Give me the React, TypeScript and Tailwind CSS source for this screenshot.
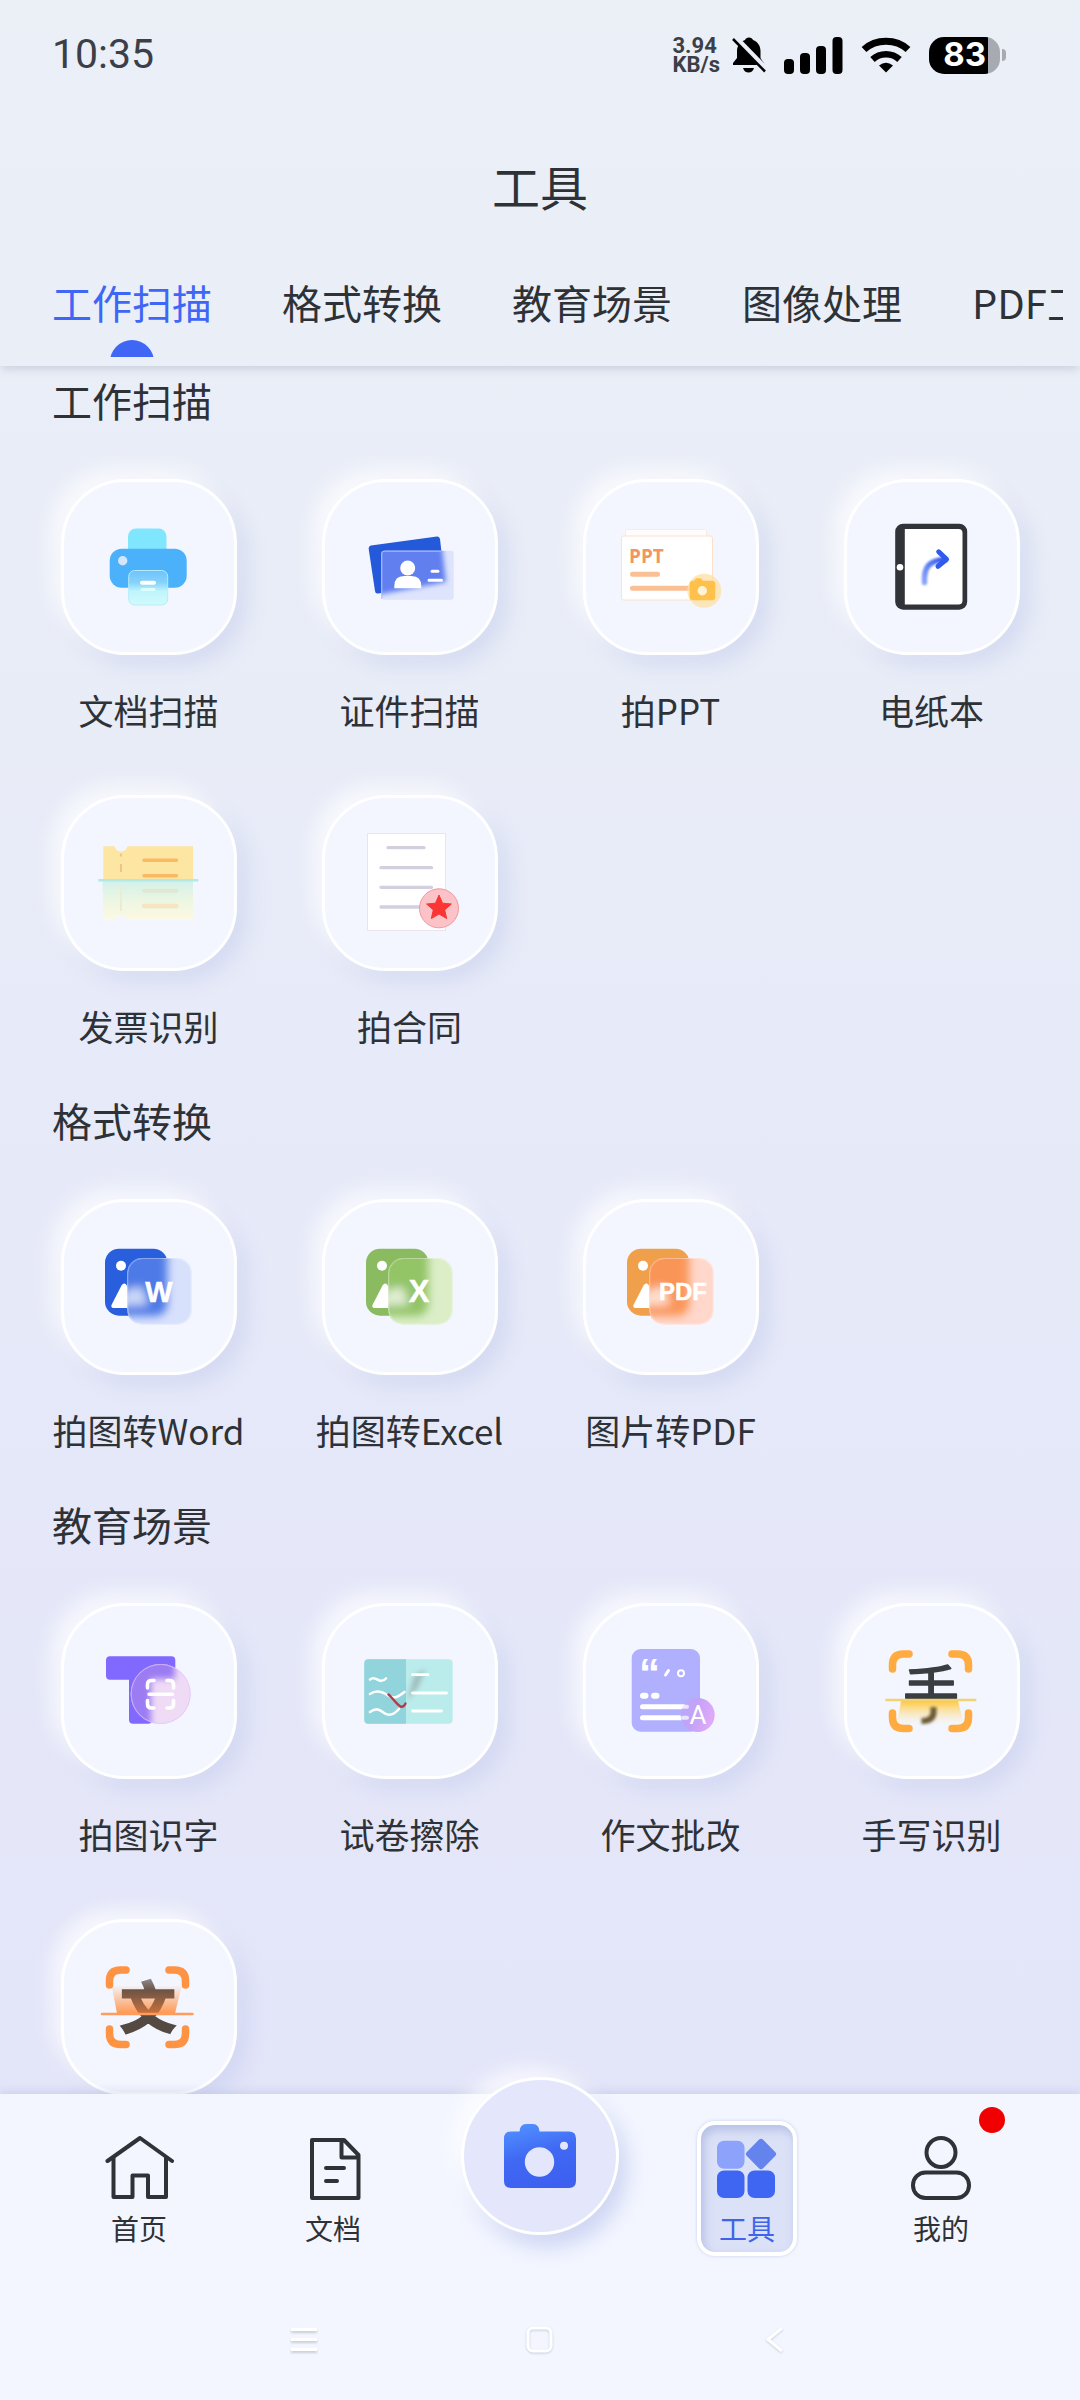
import { useState } from "react";
import type { ReactNode } from "react";

type Tool = { id: string; label?: string; icon: ReactNode };
type Section = { title: string; tools: Tool[] };

const tabs = ["工作扫描", "格式转换", "教育场景", "图像处理", "PDF工具"];

// All tool icons share the same canvas as the tile they sit on
function Art({ children }: { children: ReactNode }) {
  return (
    <svg viewBox="4 3 170 170" className="size-full" aria-hidden="true">
      {children}
    </svg>
  );
}

function PrinterIcon() {
  return (
    <Art>
      <defs>
        <linearGradient id="printer-paper" x1="0" y1="0" x2="0" y2="1">
          <stop offset="0" stopColor="#6fc3fb" />
          <stop offset="0.35" stopColor="#86d2fb" />
          <stop offset="0.6" stopColor="#bff5fb" />
          <stop offset="1" stopColor="#d0fbfb" />
        </linearGradient>
      </defs>
      <rect x="68" y="49.5" width="38.5" height="36" rx="8" fill="#80e6fd" />
      <rect x="49.7" y="69.7" width="77" height="39" rx="12" fill="#4ab1fa" />
      <circle cx="62.7" cy="81.7" r="4.7" fill="#d3e6fb" />
      <rect x="68.7" y="91.5" width="39" height="34.5" rx="6" fill="url(#printer-paper)" stroke="#b5ecfd" strokeWidth="1" />
      <path d="M82 103.7h12" stroke="#fff" strokeWidth="4" strokeLinecap="round" />
      <path d="M82 110.5h12" stroke="#dcfffc" strokeWidth="3" strokeLinecap="round" />
    </Art>
  );
}

function IdCardIcon() {
  return (
    <Art>
      <defs>
        <filter id="id-blur">
          <feGaussianBlur stdDeviation="2.5" />
        </filter>
        <clipPath id="id-clip">
          <rect x="60.3" y="71.7" width="72.4" height="49" rx="3" />
        </clipPath>
      </defs>
      <path d="M50 66.5 116 57.5Q118.500 57.200 119 60L124 104 57 114.500Q54.500 115 54 112L47.700 70Q47.500 67 50 66.500Z" fill="#2459d9" />
      <g clipPath="url(#id-clip)">
        <rect x="60" y="71" width="73" height="50" fill="#dde4fc" />
        <path d="M40 50 119 50 125 103 50 117Z" fill="#627ff0" filter="url(#id-blur)" />
      </g>
      <path d="M60.800 120V74.500Q60.800 72.200 63.500 72.200H120" fill="none" stroke="#aebffa" strokeWidth="1" />
      <circle cx="86.7" cy="89" r="7.5" fill="#fff" />
      <path d="M73.300 109.300v-2Q73.300 97 83 97h7.500Q100.300 97 100.300 107.300v2Z" fill="#fff" />
      <path d="M111 92.300h6M108 101.300h12.500" stroke="#fff" strokeWidth="3" strokeLinecap="round" />
    </Art>
  );
}

function PptIcon() {
  return (
    <Art>
      <rect x="43.500" y="50.500" width="81" height="60" rx="2" fill="#fffdfc" stroke="#fdeade" />
      <rect x="39.500" y="57" width="91" height="64" rx="2" fill="#fff" stroke="#fbe0cd" />
      <text x="47" y="84" fontSize="19" fontWeight="700" fill="#f09761" className="font-['Liberation_Sans_Narrow','Open_Sans',sans-serif]">
        PPT
      </text>
      <path d="M50.500 95.300h25M50.500 109.300h58" stroke="#fabf93" strokeWidth="5" strokeLinecap="round" />
      <circle cx="122.300" cy="111.700" r="17" fill="#fde0a4" opacity="0.750" />
      <path d="M112 101.700l2-2.500h5l2 2.500h9q3.300 0 3.300 3.300v13q0 3.300-3.300 3.300h-19q-3.300 0-3.300-3.300v-13q0-3.300 3.300-3.300Z" fill="#ffc14b" />
      <circle cx="120.300" cy="111.700" r="4.700" fill="#fff3d6" />
    </Art>
  );
}

function EPaperIcon() {
  return (
    <Art>
      <defs>
        <linearGradient id="epaper-arrow" x1="0" y1="1" x2="1" y2="0">
          <stop offset="0" stopColor="#8ba4fa" />
          <stop offset="1" stopColor="#3157ee" />
        </linearGradient>
        <filter id="epaper-blur" x="-50%" y="-50%" width="200%" height="200%">
          <feGaussianBlur stdDeviation="1" />
        </filter>
      </defs>
      <rect x="52.200" y="44.700" width="72" height="86" rx="8" fill="#303337" />
      <path d="M61.800 50H115.500q4 0 4 4v67.500q0 4-4 4H61.800Z" fill="#fff" />
      <circle cx="57" cy="88.300" r="3.300" fill="#fff" />
      <path d="M81.500 103.500C80.500 88 86 81.500 102 80.500" fill="none" stroke="url(#epaper-arrow)" strokeWidth="5.500" strokeLinecap="round" filter="url(#epaper-blur)" />
      <path d="M95.700 72.800 103.500 80.300 95 87.300" fill="none" stroke="#3259ee" strokeWidth="5" strokeLinecap="round" strokeLinejoin="round" />
    </Art>
  );
}

function TicketIcon() {
  return (
    <Art>
      <defs>
        <linearGradient id="ticket-fade" x1="0" y1="0" x2="0" y2="1">
          <stop offset="0" stopColor="#d3f1ea" />
          <stop offset="0.500" stopColor="#ecf6e2" />
          <stop offset="1" stopColor="#fdf9e2" />
        </linearGradient>
      </defs>
      <path d="M43.300 51.300H54.500a6.700 6.700 0 0 0 13 0H133V84H43.300Z" fill="#fde6a2" />
      <path d="M61 58.500v3M61 69v8" stroke="#eab68a" strokeWidth="1.500" />
      <path d="M84 65.300h32.500M84 80.700h32.500" stroke="#f9ba63" strokeWidth="3.500" strokeLinecap="round" />
      <path d="M42.500 86H133v38.700H67.500a6.700 5 0 0 0-13 0H43.300Z" fill="url(#ticket-fade)" />
      <path d="M61 90v26" stroke="#ecebd3" strokeWidth="2" />
      <path d="M84 95.700h32.500" stroke="#dfe8d0" strokeWidth="4" strokeLinecap="round" />
      <path d="M84 111h32.500" stroke="#f7e5c2" strokeWidth="4.500" strokeLinecap="round" />
      <path d="M38.300 85.300h100" stroke="#b3e9e4" strokeWidth="2.500" />
    </Art>
  );
}

function ContractIcon() {
  return (
    <Art>
      <rect x="46.500" y="38.500" width="78" height="97" fill="#fff" stroke="#e9e4f0" />
      <path d="M67 52.700h36M60 72.700h50.500M60 92.300h50.500M60 112h40" stroke="#d2d0de" strokeWidth="3.300" strokeLinecap="round" />
      <circle cx="118" cy="113.300" r="19.500" fill="#fbc3c7" stroke="#f2989e" />
      <path d="M118 100l3.500 8.200 8.900.8-6.700 5.900 2 8.700-7.700-4.600-7.700 4.600 2-8.700-6.700-5.900 8.900-.8Z" fill="#fb3534" stroke="#fb3534" strokeLinejoin="round" />
    </Art>
  );
}

type ConvertProps = { id: string; text: string; size: number; baseline: number; x: number; back: string; glass: string; tint: string };

// Picture thumbnail with a frosted file badge over it
function ConvertIcon({ id, text, size, baseline, x, back, glass, tint }: ConvertProps) {
  return (
    <Art>
      <defs>
        <filter id={`${id}-blur`} x="-30%" y="-30%" width="160%" height="160%">
          <feGaussianBlur stdDeviation="4" />
        </filter>
        <clipPath id={`${id}-clip`}>
          <rect x="67.300" y="59" width="64.400" height="66.700" rx="15" />
        </clipPath>
      </defs>
      <rect x="45" y="49.700" width="62.300" height="67" rx="14" fill={back} />
      <circle cx="61" cy="66.700" r="5" fill="#fff" />
      <path d="M61.500 86.500Q64 83 66.500 86L82 109H53.500Q50.500 108.500 51.500 106Z" fill="#fff" />
      <g clipPath={`url(#${id}-clip)`}>
        <rect x="67" y="59" width="65" height="67" fill={glass} />
        <g filter={`url(#${id}-blur)`}>
          <rect x="40" y="40" width="67.300" height="77" rx="12" fill={tint} />
          <path d="M56 107 68 90l14-2 6 18Z" fill="#fff" opacity="0.700" />
        </g>
      </g>
      <rect x="67.800" y="59.500" width="63.400" height="65.700" rx="15" fill="none" stroke="#fff" strokeOpacity="0.350" />
      <text x={x} y={baseline} textAnchor="middle" fontSize={size} fontWeight="700" fill="#fff" stroke="#fff" strokeWidth="0.500" className="font-['Liberation_Sans',sans-serif]">
        {text}
      </text>
    </Art>
  );
}

function TextScanIcon() {
  return (
    <Art>
      <defs>
        <filter id="text-blur" x="-30%" y="-30%" width="160%" height="160%">
          <feGaussianBlur stdDeviation="3" />
        </filter>
        <clipPath id="text-clip">
          <circle cx="100.700" cy="91" r="30" />
        </clipPath>
      </defs>
      <rect x="46" y="53.300" width="69.300" height="23.400" rx="4" fill="#8169ff" />
      <rect x="69" y="60" width="23" height="60.700" rx="4" fill="#8169ff" />
      <g clipPath="url(#text-clip)">
        <rect x="70" y="60" width="62" height="62" fill="#efdbf5" />
        <g filter="url(#text-blur)" fill="#9c7bf2">
          <rect x="40" y="50" width="75" height="26" />
          <rect x="60" y="60" width="31" height="70" />
        </g>
      </g>
      <circle cx="100.700" cy="91" r="29.500" fill="none" stroke="#e0c2fb" strokeOpacity="0.700" />
      <path
        d="M87.500 85v-3.500q0-4 4-4H94M107 77.500h2.500q4 0 4 4V85M113.500 97.500v3.500q0 4-4 4H107M94 105h-2.500q-4 0-4-4v-3.500M89 91.300h23.500"
        fill="none"
        stroke="#fff"
        strokeWidth="3.600"
        strokeLinecap="round"
      />
    </Art>
  );
}

function EraseIcon() {
  return (
    <Art>
      <defs>
        <filter id="erase-blur" x="-60%" y="-30%" width="220%" height="160%">
          <feGaussianBlur stdDeviation="2.500" />
        </filter>
      </defs>
      <rect x="43.300" y="56.300" width="88.400" height="64.400" rx="4" fill="#baeceb" />
      <path d="M47.300 56.300H85v64.400H47.300q-4 0-4-4V60.300q0-4 4-4Z" fill="#91d4dc" />
      <path d="M86 98 93 73l12-7-8 18Z" fill="#8e9c9c" opacity="0.600" filter="url(#erase-blur)" />
      <path
        d="M49 76.500c5-4 8 2 11 1.300q3 0 5-2.300M49 91c7-5 13-2 18 1.500 6 4 11 1 16.500-3.500M49 109c7-5 10-2 15 1.500 5 3 9 1 14-4.500"
        fill="none"
        stroke="#fff"
        strokeWidth="2.600"
        strokeLinecap="round"
      />
      <path d="M91.500 71.700h15.500M91.500 90h34M91.500 108h29" stroke="#fff" strokeWidth="2.800" strokeLinecap="round" />
      <path d="M67.500 91.500C71 94 75 101 79.500 103.500q3 1 5-3" fill="none" stroke="#b93848" strokeWidth="2.400" strokeLinecap="round" />
    </Art>
  );
}

function EssayIcon() {
  return (
    <Art>
      <defs>
        <linearGradient id="essay-badge" x1="0" y1="0" x2="1" y2="0.300">
          <stop offset="0" stopColor="#b7aafc" />
          <stop offset="0.500" stopColor="#c3a2f6" />
          <stop offset="1" stopColor="#dfa9f8" />
        </linearGradient>
      </defs>
      <rect x="49.700" y="46" width="68.300" height="82.700" rx="9" fill="#b0b0fe" />
      <text x="57" y="85" fontSize="42" fontWeight="700" fill="#fff" className="font-['Liberation_Sans',sans-serif]">
        “
      </text>
      <path d="M86.500 67.500 83.500 72" stroke="#fff" strokeWidth="3" strokeLinecap="round" />
      <circle cx="99" cy="70.300" r="3" fill="none" stroke="#fff" strokeWidth="2" />
      <path d="M61 92.700h2.500M72 92.700h2.500" stroke="#fff" strokeWidth="6" strokeLinecap="round" />
      <path d="M60.500 103.700h44M60.500 114.700h44" stroke="#fff" strokeWidth="5" strokeLinecap="round" />
      <circle cx="115.700" cy="112" r="17" fill="url(#essay-badge)" />
      <path d="M101 103.700h4M101 114.700h4" stroke="#fff" strokeOpacity="0.700" strokeWidth="4" strokeLinecap="round" />
      <text x="116" y="121" textAnchor="middle" fontSize="26" fill="#fff" className="font-['Roboto',sans-serif]">
        A
      </text>
    </Art>
  );
}

function Corners({ color }: { color: string }) {
  return (
    <path
      d="M49.500 66V62q0-11 11-11H66M109 51h5.500q11 0 11 11v4M125.500 110v4.500q0 11-11 11H109M66 125.500H60.500q-11 0-11-11V110"
      fill="none"
      stroke={color}
      strokeWidth="7.500"
      strokeLinecap="round"
    />
  );
}

function HandwritingIcon() {
  return (
    <Art>
      <defs>
        <linearGradient id="hand-glow" x1="0" y1="0" x2="0" y2="1">
          <stop offset="0" stopColor="#ffc83e" />
          <stop offset="1" stopColor="#ffe9b5" stopOpacity="0" />
        </linearGradient>
        <filter id="hand-blur" x="-40%" y="-40%" width="180%" height="180%">
          <feGaussianBlur stdDeviation="1.800" />
        </filter>
        <clipPath id="hand-top">
          <rect x="50" y="40" width="80" height="56" />
        </clipPath>
      </defs>
      <path d="M58 98h57l6 24H54Z" fill="url(#hand-glow)" />
      <text
        x="88"
        y="109"
        textAnchor="middle"
        fontSize="56"
        fill="#3a3e42"
        stroke="#3a3e42"
        strokeWidth="1.500"
        strokeLinejoin="round"
        clipPath="url(#hand-top)"
        className="font-['Noto_Sans_CJK_SC',sans-serif]"
      >
        手
      </text>
      {/* the part below the scan beam is out of focus */}
      <path d="M90.500 104v5q0 9-12 9" fill="none" stroke="#6d5a35" strokeWidth="6" filter="url(#hand-blur)" />
      <path d="M42.300 97h91" stroke="#f3d274" strokeWidth="2.500" />
      <Corners color="#ffab40" />
    </Art>
  );
}

function CharScanIcon() {
  return (
    <Art>
      <defs>
        <linearGradient id="char-glow" x1="0" y1="0" x2="0" y2="1">
          <stop offset="0" stopColor="#ff9852" stopOpacity="0.050" />
          <stop offset="1" stopColor="#ff9852" />
        </linearGradient>
        <linearGradient id="char-ink" gradientUnits="userSpaceOnUse" x1="0" y1="60" x2="0" y2="97">
          <stop offset="0" stopColor="#8d8a8e" />
          <stop offset="0.300" stopColor="#6c5446" />
          <stop offset="0.940" stopColor="#c9713c" />
          <stop offset="0.960" stopColor="#554a42" />
        </linearGradient>
      </defs>
      <path d="M51.700 67h70L115 94.500H57Z" fill="url(#char-glow)" />
      <text
        x="88"
        y="109"
        textAnchor="middle"
        fontSize="54"
        fontWeight="700"
        fill="url(#char-ink)"
        stroke="url(#char-ink)"
        strokeWidth="3"
        className="font-['Noto_Sans_CJK_SC',sans-serif]"
      >
        文
      </text>
      <path d="M42 95h90.500" stroke="#ff9c5c" strokeWidth="2.500" strokeLinecap="round" />
      <Corners color="#ff9344" />
    </Art>
  );
}

const sections: Section[] = [
  {
    title: "工作扫描",
    tools: [
      { id: "doc", label: "文档扫描", icon: <PrinterIcon /> },
      { id: "card", label: "证件扫描", icon: <IdCardIcon /> },
      { id: "ppt", label: "拍PPT", icon: <PptIcon /> },
      { id: "epaper", label: "电纸本", icon: <EPaperIcon /> },
      { id: "ticket", label: "发票识别", icon: <TicketIcon /> },
      { id: "contract", label: "拍合同", icon: <ContractIcon /> },
    ],
  },
  {
    title: "格式转换",
    tools: [
      {
        id: "word",
        label: "拍图转Word",
        icon: <ConvertIcon id="word" text="W" size={29} baseline={103} x={99} back="#295edc" glass="#d8e1fc" tint="#4d7ae7" />,
      },
      {
        id: "excel",
        label: "拍图转Excel",
        icon: <ConvertIcon id="excel" text="X" size={31} baseline={103} x={98} back="#8bbb60" glass="#dbeec8" tint="#93c466" />,
      },
      {
        id: "pdf",
        label: "图片转PDF",
        icon: <ConvertIcon id="pdf" text="PDF" size={24} baseline={101} x={101} back="#f0a04a" glass="#ffd7cb" tint="#fa9559" />,
      },
    ],
  },
  {
    title: "教育场景",
    tools: [
      { id: "text", label: "拍图识字", icon: <TextScanIcon /> },
      { id: "erase", label: "试卷擦除", icon: <EraseIcon /> },
      { id: "essay", label: "作文批改", icon: <EssayIcon /> },
      { id: "hand", label: "手写识别", icon: <HandwritingIcon /> },
      { id: "char", icon: <CharScanIcon /> },
    ],
  },
];

function StatusBar() {
  return (
    <div className="flex h-[110px] items-center justify-between pr-[74px] pl-[52px] font-['Roboto',sans-serif] text-[#3c4046]">
      <span className="text-[41px]">10:35</span>
      <div className="flex items-center gap-[18px]">
        <div className="flex items-center gap-3">
          <div className="text-[22px] leading-[19px] font-bold">
            <div>3.94</div>
            <div>KB/s</div>
          </div>
          <svg width="34" height="36" viewBox="0 0 34 36" aria-hidden="true">
            <path d="M17 0.500c2 0 3.500 1 4 2.500 5 2 7.500 6 7.500 11v7l4.500 7H1V26l4-5v-7c0-5 3-9 8-11 .5-1.500 2-2.500 4-2.500Z" fill="#000" />
            <path d="M11 31h11q-1.500 4.500-5.500 4.500T11 31Z" fill="#000" />
            <path d="M3 0.500 35 33.500" stroke="#eaeff7" strokeWidth="6" />
            <path d="M1 2 33 34.500" stroke="#000" strokeWidth="2.500" />
          </svg>
        </div>
        <svg width="59" height="37" viewBox="0 0 59 37" aria-hidden="true">
          <rect x="0" y="22" width="10" height="15" rx="4" />
          <rect x="16" y="16" width="10" height="21" rx="4" />
          <rect x="32" y="9" width="10" height="28" rx="4" />
          <rect x="48.500" y="0" width="10" height="37" rx="4" />
        </svg>
        <svg width="50" height="36" viewBox="0 0 50 36" aria-hidden="true">
          <path d="M3 12.500C15 1.500 35 1.500 47 12.500" fill="none" stroke="#000" strokeWidth="7" />
          <path d="M11.500 22.500C19 15.500 31 15.500 38.500 22.500" fill="none" stroke="#000" strokeWidth="6.500" />
          <path d="M18 28.500Q25 23 32 28.500L25 35.500Z" />
        </svg>
        <div className="flex items-center gap-[2px]">
          <div className="flex h-[37px] w-[71px] items-center justify-end rounded-[15px] bg-linear-to-r from-black from-[83%] to-[#a7aab0] to-[83%] pr-[14px] font-['Inter',sans-serif] text-[33px] font-bold text-white">
            83
          </div>
          <div className="h-3 w-1 rounded-r-full bg-[#a7aab0]" />
        </div>
      </div>
    </div>
  );
}

function ToolButton({ tool }: { tool: Tool }) {
  return (
    <button type="button" className="flex flex-col items-center gap-[31px]">
      <span className="size-44 rounded-[64px] border-3 border-white bg-[#f3f6ff] shadow-[-10px_-10px_20px_rgba(255,255,255,0.7),10px_10px_20px_rgba(190,200,235,0.45)]">
        {tool.icon}
      </span>
      {tool.label && <span className="text-[35px] leading-[48px] whitespace-nowrap">{tool.label}</span>}
    </button>
  );
}

function HomeIcon() {
  return (
    <svg width="70" height="64" viewBox="-1 0 70 64" fill="none" stroke="#2f3338" strokeWidth="4" strokeLinejoin="round" strokeLinecap="round" aria-hidden="true">
      <path d="M2.500 25 35 2 67 25" />
      <path d="M8.500 22V61H27.500V39.500H43V61H61V22" />
    </svg>
  );
}

function DocIcon() {
  return (
    <svg width="56" height="64" viewBox="-4 0 56 64" fill="none" stroke="#2f3338" strokeWidth="4" strokeLinejoin="round" strokeLinecap="round" aria-hidden="true">
      <path d="M3 4H35L49.500 19V62H3ZM32.500 4.500V21.500H49.500" />
      <path d="M17 32H35M17 45H28" />
    </svg>
  );
}

function GridIcon() {
  return (
    <svg width="60" height="64" viewBox="0 -2 60 64" aria-hidden="true">
      <rect x="0" y="2.700" width="27.500" height="28" rx="7" fill="#8ca2fb" />
      <rect x="32.500" y="4.500" width="23" height="23" rx="3" fill="#6583ec" transform="rotate(45 44 16)" />
      <rect x="0" y="32.500" width="27.500" height="27.500" rx="7" fill="#3f66f2" />
      <rect x="30.500" y="32.500" width="27.500" height="27.500" rx="7" fill="#3f66f2" />
    </svg>
  );
}

function UserIcon() {
  return (
    <svg width="60" height="64" viewBox="0 0 60 64" fill="none" stroke="#2f3338" strokeWidth="4" aria-hidden="true">
      <circle cx="30" cy="16.500" r="14.500" />
      <rect x="2" y="36.500" width="56" height="25.500" rx="12.500" />
    </svg>
  );
}

function CameraIcon() {
  return (
    <svg width="72" height="64" viewBox="0 0 72 64" aria-hidden="true">
      <defs>
        <linearGradient id="camera-fill" x1="0.200" y1="0" x2="0.500" y2="1">
          <stop offset="0" stopColor="#5190ff" />
          <stop offset="0.500" stopColor="#4069f3" />
          <stop offset="1" stopColor="#3d60f1" />
        </linearGradient>
      </defs>
      <path d="M7 7.500h8.500Q16 0 22 0h7q6 0 6.500 7.500H65q7 0 7 7V57q0 7-7 7H7q-7 0-7-7V14.500q0-7 7-7Z" fill="url(#camera-fill)" />
      <circle cx="35.500" cy="38" r="14.700" fill="#e4e7fb" />
      <circle cx="60" cy="21.700" r="4" fill="#e4e7fb" />
    </svg>
  );
}

type NavItemProps = { label: string; icon: ReactNode; active?: boolean; dot?: boolean };

function NavItem({ label, icon, active, dot }: NavItemProps) {
  return (
    <div className="flex flex-1 justify-center">
      <button
        type="button"
        aria-current={active ? "page" : undefined}
        className={
          active
            ? "relative flex h-[135px] w-[100px] flex-col items-center gap-2 rounded-[18px] border-4 border-white bg-[#dbe1f7] pt-[11px] text-[#3f63ea] shadow-[inset_3px_5px_10px_rgba(150,165,215,0.55),0_0_3px_rgba(150,165,215,0.5)]"
            : "relative flex h-[135px] w-[100px] flex-col items-center gap-2 pt-[15px]"
        }
      >
        {icon}
        <span className="text-[28px] leading-[40px]">{label}</span>
        {dot && <span className="absolute -top-[14px] -right-[14px] size-[26px] rounded-full bg-[#f00000]" />}
      </button>
    </div>
  );
}

function BottomNav() {
  return (
    <nav className="relative bg-[#f3f6ff] pt-[27px] shadow-[0_-3px_8px_rgba(170,175,215,0.35)]">
      <div className="flex items-start px-[42px]">
        <NavItem label="首页" icon={<HomeIcon />} />
        <NavItem label="文档" icon={<DocIcon />} />
        <div className="-mt-11 flex w-[220px] justify-center">
          <button
            type="button"
            aria-label="camera"
            className="flex size-[158px] items-center justify-center rounded-full border-3 border-white bg-[#e4e7fb] shadow-[-10px_-10px_20px_rgba(255,255,255,0.7),8px_12px_20px_rgba(150,165,225,0.4)]"
          >
            <CameraIcon />
          </button>
        </div>
        <NavItem label="工具" icon={<GridIcon />} active />
        <NavItem label="我的" icon={<UserIcon />} dot />
      </div>

      {/* system navigation keys */}
      <div className="flex h-[144px] items-center justify-center gap-[208px] pt-6 text-white">
        <svg width="28" height="28" viewBox="0 0 28 28" fill="none" stroke="currentColor" strokeWidth="3" className="drop-shadow-[0_2px_1px_rgba(150,155,170,0.45)]" aria-hidden="true">
          <path d="M1 3.500h26M1 13.500h26M1 23.500h26" />
        </svg>
        <svg width="28" height="28" viewBox="0 0 28 28" fill="none" stroke="currentColor" strokeWidth="3" className="drop-shadow-[0_1px_1px_rgba(150,155,170,0.45)]" aria-hidden="true">
          <rect x="2" y="2" width="23" height="23" rx="5" />
        </svg>
        <svg width="28" height="28" viewBox="0 0 28 28" fill="none" stroke="currentColor" strokeWidth="3" className="drop-shadow-[0_1px_1px_rgba(150,155,170,0.45)]" aria-hidden="true">
          <path d="M20 2 6 13.500 20 25" />
        </svg>
      </div>
    </nav>
  );
}

export default function App() {
  const [activeTab, setActiveTab] = useState(0);

  return (
    <div className="flex h-screen flex-col overflow-hidden bg-linear-to-b from-[#ebf0f7] to-[#e3e5f9] to-[87%] font-['Noto_Sans_CJK_SC',sans-serif] text-[#2e3237]">
      <header className="shadow-[0_5px_8px_-2px_rgba(120,130,155,0.28)]">
        <StatusBar />
        <h1 className="flex h-[160px] items-center justify-center pb-[10px] text-[48px]">工具</h1>
        <div className="mr-[17px] flex gap-[70px] overflow-hidden pb-[9px] pl-[52px]">
          {tabs.map((tab, i) => (
            <button
              key={tab}
              type="button"
              onClick={() => setActiveTab(i)}
              className={
                i === activeTab
                  ? "flex shrink-0 flex-col items-center gap-[6px] text-[40px] leading-[64px] text-[#3f66f5]"
                  : "flex shrink-0 flex-col items-center gap-[6px] text-[40px] leading-[64px]"
              }
            >
              {tab}
              <span className="h-[17px] overflow-hidden">
                {i === activeTab && <span className="block size-11 rounded-full bg-[#3f66f5]" />}
              </span>
            </button>
          ))}
        </div>
      </header>

      <main className="min-h-0 flex-1 overflow-y-auto pt-[10px] [scrollbar-width:none]">
        {sections.map((section) => (
          <section key={section.title} className="mb-[46px]">
            <h2 className="mb-[55px] pl-[52px] text-[40px] leading-[48px]">{section.title}</h2>
            <div className="grid grid-cols-4 gap-y-[61px] px-[18px]">
              {section.tools.map((tool) => (
                <ToolButton key={tool.id} tool={tool} />
              ))}
            </div>
          </section>
        ))}
      </main>

      <BottomNav />
    </div>
  );
}
